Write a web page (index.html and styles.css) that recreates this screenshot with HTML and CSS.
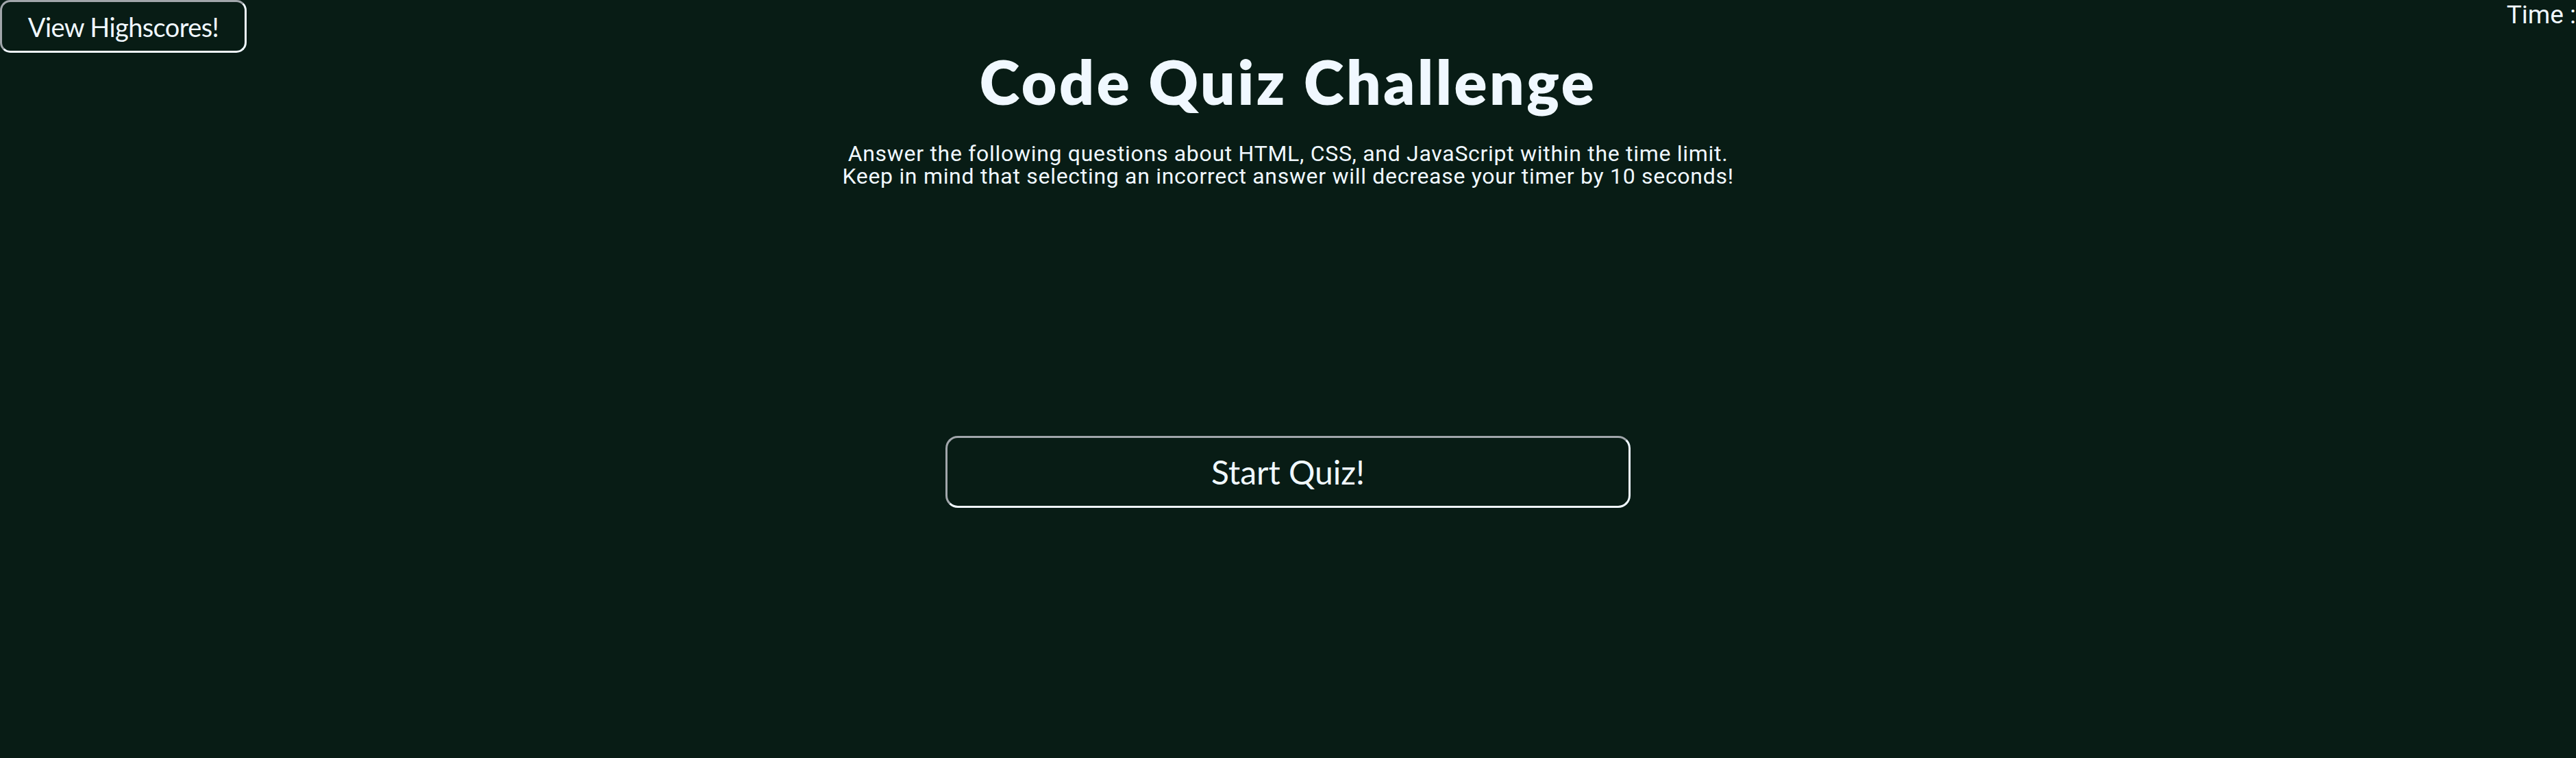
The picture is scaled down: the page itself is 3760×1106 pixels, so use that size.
FILE: index.html
```html
<!DOCTYPE html>
<html lang="en">
<head>
<meta charset="utf-8">
<title>Code Quiz Challenge</title>
<link rel="stylesheet" href="styles.css">
</head>
<body>
<header class="topbar">
  <button class="btn btn-scores">View Highscores!</button>
  <h1 class="title">Code Quiz Challenge</h1>
  <div class="timer">Time : <span class="timer-value"></span></div>
</header>
<main class="intro">
  <p class="lead">Answer the following questions about HTML, CSS, and JavaScript within the time limit.<br>Keep in mind that selecting an incorrect answer will decrease your timer by 10 seconds!</p>
  <button class="btn btn-start">Start Quiz!</button>
</main>
</body>
</html>
```
FILE: styles.css
```css
html, body {
  margin: 0;
  padding: 0;
  background: #081c15;
  color: #f0f8ff;
  height: 100%;
}

body {
  font-family: Roboto, "Noto Sans", sans-serif;
}

.topbar {
  display: grid;
  grid-template-columns: 1fr auto 1fr;
  align-items: start;
}

.btn {
  background: #081c15;
  color: #f0f8ff;
  border: 3px inset #f0f8ff;
  font-family: Lato, "Open Sans", sans-serif;
  font-weight: 400;
  cursor: pointer;
  padding: 0;
  display: flex;
  align-items: center;
  justify-content: center;
}

.btn-scores {
  justify-self: start;
  width: 360px;
  height: 77px;
  border-radius: 15px;
  font-size: 38px;
  letter-spacing: -0.6px;
}

.title {
  margin: 66px 0 0;
  font-family: Lato, "Open Sans", sans-serif;
  font-weight: 800;
  font-size: 89px;
  letter-spacing: 3.6px;
  line-height: 1.2;
  text-align: center;
}

.timer {
  justify-self: end;
  font-size: 37px;
  line-height: normal;
  white-space: nowrap;
}

.intro {
  display: flex;
  flex-direction: column;
  align-items: center;
}

.lead {
  margin: 35px 0 0;
  font-size: 32px;
  letter-spacing: 0.7px;
  line-height: 33px;
  text-align: center;
}

.btn-start {
  margin-top: 362px;
  width: 1000px;
  height: 105px;
  border-radius: 18px;
  font-size: 48px;
}
```
